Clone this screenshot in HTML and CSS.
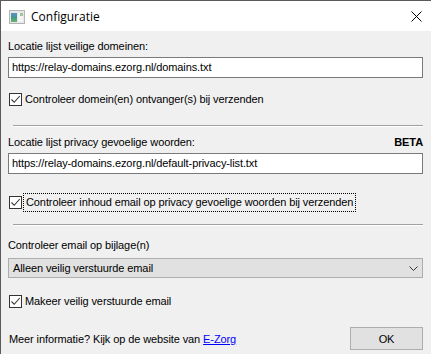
FILE: index.html
```html
<!DOCTYPE html>
<html>
<head>
<meta charset="utf-8">
<link rel="stylesheet" href="styles.css">
</head>
<body>
<div class="window">
  <div class="titlebar">
    <svg class="app-icon" width="16" height="14" viewBox="0 0 16 14">
      <defs>
        <linearGradient id="g" x1="0" y1="0" x2="0" y2="1">
          <stop offset="0" stop-color="#5b8fc7"/>
          <stop offset="0.5" stop-color="#3f9a8a"/>
          <stop offset="1" stop-color="#6bb36b"/>
        </linearGradient>
      </defs>
      <rect x="0.5" y="0.5" width="15" height="13" fill="#e8e8e8" stroke="#b4b4b4"/>
      <rect x="2" y="3" width="6" height="9" fill="url(#g)"/>
      <rect x="9" y="3" width="5" height="9" fill="#f4f4f4"/>
      <rect x="11" y="3" width="3" height="3" fill="#9cc6a0"/>
    </svg>
    <span class="title">Configuratie</span>
    <svg class="close" width="11" height="11" viewBox="0 0 11 11">
      <path d="M0.5 0.5 L10.5 10.5 M10.5 0.5 L0.5 10.5" stroke="#000" stroke-width="1"/>
    </svg>
  </div>
  <div class="content">
    <div class="label label-first">Locatie lijst veilige domeinen:</div>
    <div class="input">https://relay-domains.ezorg.nl/domains.txt</div>
    <div class="check check-1">
      <span class="box"><svg width="11" height="11" viewBox="0 0 11 11"><path d="M1.5 5.5 L4.2 8.3 L9.8 2" fill="none" stroke="#333" stroke-width="1.1"/></svg></span>
      <span class="check-text">Controleer domein(en) ontvanger(s) bij verzenden</span>
    </div>
    <div class="sep sep-1"></div>
    <div class="label label-row label-2">
      <span>Locatie lijst privacy gevoelige woorden:</span>
      <span class="beta">BETA</span>
    </div>
    <div class="input">https://relay-domains.ezorg.nl/default-privacy-list.txt</div>
    <div class="check check-2">
      <span class="box"><svg width="11" height="11" viewBox="0 0 11 11"><path d="M1.5 5.5 L4.2 8.3 L9.8 2" fill="none" stroke="#333" stroke-width="1.1"/></svg></span>
      <span class="check-text focus">Controleer inhoud email op privacy gevoelige woorden bij verzenden</span>
    </div>
    <div class="sep sep-2"></div>
    <div class="label label-3">Controleer email op bijlage(n)</div>
    <div class="combo">
      <span>Alleen veilig verstuurde email</span>
      <svg class="chev" width="9" height="5" viewBox="0 0 9 5"><path d="M0.5 0.5 L4.5 4.5 L8.5 0.5" fill="none" stroke="#333" stroke-width="1"/></svg>
    </div>
    <div class="check check-3">
      <span class="box"><svg width="11" height="11" viewBox="0 0 11 11"><path d="M1.5 5.5 L4.2 8.3 L9.8 2" fill="none" stroke="#333" stroke-width="1.1"/></svg></span>
      <span class="check-text">Makeer veilig verstuurde email</span>
    </div>
    <div class="footer">
      <span class="info">Meer informatie? Kijk op de website van <a class="link">E-Zorg</a></span>
      <span class="btn">OK</span>
    </div>
  </div>
</div>
</body>
</html>
```
FILE: styles.css
```css
html, body {
  margin: 0;
  padding: 0;
  background: #f0f0f0;
}
.window {
  width: 431px;
  height: 354px;
  box-sizing: border-box;
  border-top: 1px solid #5a5a5a;
  border-left: 1px solid #5a5a5a;
  background: #f0f0f0;
  font-family: "Liberation Sans", Arial, sans-serif;
  font-size: 11px;
  letter-spacing: -0.1px;
  color: #000;
  overflow: hidden;
}
.titlebar {
  height: 30px;
  background: #fff;
  display: flex;
  align-items: center;
  padding-left: 8px;
  padding-right: 9px;
}
.app-icon {
  margin-top: 1px;
}
.title {
  font-family: "Open Sans", "Noto Sans", sans-serif;
  font-size: 12px;
  letter-spacing: 0;
  margin-left: 6px;
  flex: 1;
  color: #000;
}
.content {
  padding: 0 8px 0 7px;
  display: flex;
  flex-direction: column;
}
.label {
  height: 13px;
  line-height: 13px;
  white-space: nowrap;
}
.label-first { margin-top: 9px; }
.label-2 { margin-top: 9px; }
.label-3 { margin-top: 13px; }
.label-row {
  display: flex;
  justify-content: space-between;
}
.beta {
  font-weight: bold;
}
.input {
  margin-top: 4px;
  height: 21px;
  box-sizing: border-box;
  border: 1px solid #7a7a7a;
  background: #fff;
  padding-left: 3px;
  line-height: 19px;
  white-space: nowrap;
  overflow: hidden;
}
.check {
  display: flex;
  align-items: center;
  height: 13px;
  padding-left: 1px;
  white-space: nowrap;
}
.check-1 { margin-top: 15px; }
.check-2 { margin-top: 22px; }
.check-3 { margin-top: 17px; }
.box {
  width: 13px;
  height: 13px;
  box-sizing: border-box;
  border: 1px solid #333;
  background: #fff;
  display: flex;
  align-items: center;
  justify-content: center;
}
.box svg { display: block; }
.check-text {
  margin-left: 3px;
  line-height: 13px;
}
.focus {
  outline: 1px dotted #000;
  outline-offset: 2px;
  margin-left: 4px;
}
.sep {
  height: 0;
  border-top: 1px solid #a0a0a0;
  border-bottom: 1px solid #fff;
  margin-left: 5px;
}
.sep-1 { margin-top: 19px; }
.sep-2 { margin-top: 15px; }
.combo {
  margin-top: 6px;
  height: 20px;
  box-sizing: border-box;
  border: 1px solid #adadad;
  background: #e1e1e1;
  display: flex;
  align-items: center;
  justify-content: space-between;
  padding: 0 4px 0 4px;
}
.chev {
  display: block;
  margin-top: 1px;
}
.footer {
  margin-top: 19px;
  display: flex;
  align-items: center;
  justify-content: space-between;
  height: 23px;
}
.info {
  padding-left: 1px;
  margin-top: 1px;
}
.link {
  color: #0000ff;
  text-decoration: underline;
}
.btn {
  width: 73px;
  height: 23px;
  box-sizing: border-box;
  border: 1px solid #adadad;
  background: #e1e1e1;
  display: flex;
  align-items: center;
  justify-content: center;
}
```
